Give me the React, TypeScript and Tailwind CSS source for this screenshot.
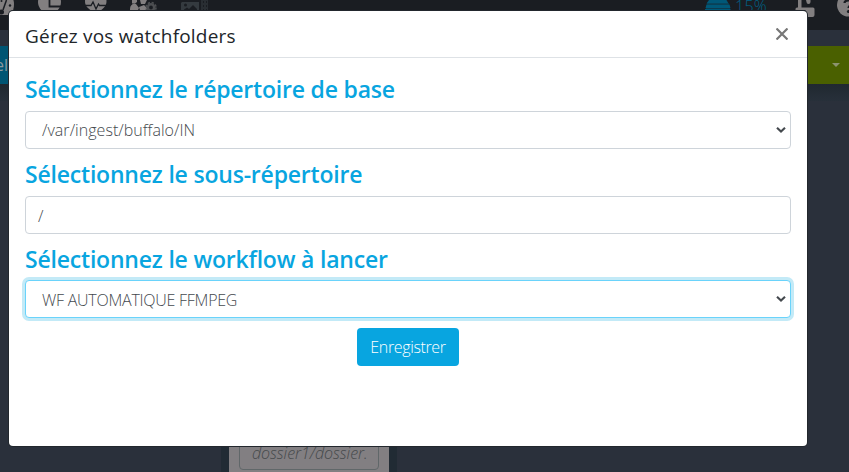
import type { ReactNode } from "react";

function Heading({ children }: { children: ReactNode }) {
  return <h2 className="h-[29px] whitespace-nowrap text-[23px] leading-[29px] font-semibold tracking-[-0.2px] text-[#08a5e0]">{children}</h2>;
}

function Chevron() {
  return (
    <svg width="10" height="8" viewBox="0 0 10 8" fill="none" stroke="#44494e" strokeWidth="2.1">
      <path d="M1 1.8 5 5.6 9 1.8" />
    </svg>
  );
}

function Select({ value, focused, fit }: { value: string; focused?: boolean; fit: string }) {
  return (
    <div
      className={`flex h-[38px] items-center justify-between rounded border bg-white pr-1 pl-4 ${
        focused ? "border-[#6ad3fb] shadow-[0_0_0_3px_#c3eaf7]" : "border-[#ced4da]"
      }`}
    >
      <span className={`whitespace-nowrap ${fit}`}>{value}</span>
      <Chevron />
    </div>
  );
}

function GaugeIcon() {
  return (
    <svg width="16" height="30" viewBox="0 0 16 30">
      <path fill="currentColor" d="M-12 4a13 13 0 0 1 26 0c0 4-1.200 8-3 11H-10z" />
      <path d="M6.500 0 3 10" stroke="#1a1d22" strokeWidth="1.500" />
      <circle cx="1.500" cy="12" r="2.500" fill="#1a1d22" />
      <circle cx="10" cy="5.500" r="1.200" fill="#1a1d22" />
      <circle cx="1.500" cy="1" r="1" fill="#1a1d22" />
    </svg>
  );
}

function PieIcon() {
  return (
    <svg width="24" height="30" viewBox="38 0 24 30">
      <circle cx="49.500" cy="2" r="11.500" fill="currentColor" />
      <path d="M49.500-10V6.500H62" fill="none" stroke="#1a1d22" strokeWidth="1.800" />
    </svg>
  );
}

function HeartbeatIcon() {
  return (
    <svg width="22" height="30" viewBox="85 0 22 30">
      <path fill="currentColor" d="M85 1c0-7 8-9 10.700-4C98-8 106.500-6 106.500 1c0 4-1.500 5.500-3 7l-7 6.200h-1.400L88 8c-1.500-1.500-3-3-3-7" />
      <path d="M85 5.500h6l2-3.500 3 7 2.500-5 1 1.500h7" fill="none" stroke="#1a1d22" strokeWidth="1.300" />
    </svg>
  );
}

function TeamGearIcon() {
  return (
    <svg width="28" height="30" viewBox="130 0 28 30">
      <path fill="currentColor" d="M132 0h5v2l-2 1.500h-3zM140 0h7l-2 4h-4zM130 9c0-4 3-6 6-5l3 4-2 4h-7zM139 7l5-2 4 4-2 5h-5z" />
      <circle cx="151" cy="7.500" r="3.200" fill="none" stroke="#4c4e51" strokeWidth="2.600" />
      <circle cx="151" cy="7.500" r="5" fill="none" stroke="#4c4e51" strokeWidth="1.600" strokeDasharray="2.300 1.630" />
    </svg>
  );
}

function MediaIcon() {
  return (
    <svg width="28" height="30" viewBox="181 0 28 30" fill="#343a3f">
      <path fillRule="evenodd" d="M182 2h17v12h-18V3zM184 5a1.500 1.500 0 1 0 3 0 1.500 1.500 0 0 0-3 0M184 11h13V9l-4-4-4 4-2-1.500-3 2z" />
      <path fill="#292e33" fillRule="evenodd" d="M201 0h7v14h-7zM203 1v2h1V1zm3 0v2h1V1zm-3 4v2h1V5zm3 0v2h1V5zm-3 4v2h1V9zm3 0v2h1V9z" />
    </svg>
  );
}

function ServerIcon() {
  return (
    <svg width="26" height="30" viewBox="705 0 26 30" fill="#005878">
      <path d="M709 0h17.500l2 3.500h-22zM706.500 4.500h23l1 3.500h-25zM705 9h25.500v4H705z" />
      <path d="M707 4.500h22v-1.200h-22zM706 9h24V7.800h-24z" opacity=".5" />
    </svg>
  );
}

function UnlockIcon() {
  return (
    <svg width="20" height="30" viewBox="795 0 20 30" fill="currentColor">
      <path fillRule="evenodd" d="M798 0h3.500v7.500H813a1.500 1.500 0 0 1 1.500 1.500v6a2 2 0 0 1-2 2H797a1.500 1.500 0 0 1-1.500-1.500V9a1.500 1.500 0 0 1 1.500-1.500h1zM803.500 10v3h2v-3z" />
      <path d="M806 0h4.500v2a2 2 0 0 1-4 0z" />
    </svg>
  );
}

function HelpIcon() {
  return (
    <svg width="12" height="30" viewBox="837 0 12 30">
      <circle cx="848.500" cy="5" r="11.500" fill="currentColor" />
      <path d="M844.500 3c0-3 7-4 7 0 0 2.500-3 2.500-3 5" fill="none" stroke="#1a1d22" strokeWidth="2.200" />
      <circle cx="848.400" cy="11.500" r="1.500" fill="#1a1d22" />
    </svg>
  );
}

export default function App() {
  return (
    <div className="relative flex h-[472px] w-[849px] flex-col overflow-hidden bg-[#2a303b] font-['Open_Sans','Noto_Sans',sans-serif] text-base font-light">
      <header className="flex h-[30px] shrink-0 justify-between bg-[#1a1d22] text-[#827f80]">
        <div className="flex">
          <GaugeIcon />
          <span className="ml-[22px]"><PieIcon /></span>
          <span className="ml-[23px]"><HeartbeatIcon /></span>
          <span className="ml-[23px]"><TeamGearIcon /></span>
          <span className="ml-[23px]"><MediaIcon /></span>
        </div>
        <div className="flex">
          <ServerIcon />
          <span className="-mt-[6px] ml-[4px] h-6 w-[60px] leading-[25px] tracking-[0.3px] text-[#006286]">15%</span>
          <UnlockIcon />
          <span className="ml-[22px]"><HelpIcon /></span>
        </div>
      </header>
      <div className="h-4 shrink-0" />
      <div className="flex h-[38px] shrink-0 justify-between">
        <div className="w-[120px] bg-[#005573] pt-[7px] leading-6 text-[#8b999f]">
          <span className="-ml-[5px] font-normal">el</span>
        </div>
        <div className="flex w-[80px] items-center justify-end bg-[#4a6000] pr-[9px]">
          <span className="border-x-4 border-t-4 border-x-transparent border-t-[#8c9370]" />
        </div>
      </div>
      <div className="h-[17px] shrink-0 bg-linear-to-b from-[#202830] to-[#27303a]" />
      <div className="flex flex-1 items-end pl-[221px]">
        <div className="bg-[#212b34] px-2">
          <div className="w-[160px] bg-[#827f82] px-[10px] pb-[2px]">
            <div className="h-[32px] rounded border border-[#606769] pl-3 text-base leading-[29px] tracking-[-0.05px] whitespace-nowrap text-[#464a4c] italic">dossier1/dossier.</div>
          </div>
        </div>
      </div>

      <section className="absolute top-[11px] left-[9px] h-[435px] w-[798px] rounded bg-white text-[#44494e] shadow-[0_0_0_1px_#22272d]">
        <header className="flex h-[47px] items-center justify-between border-b border-[#dee2e6] px-4">
          <h1 className="pt-[3px] text-[19px] leading-7 font-normal tracking-[0.21px] whitespace-nowrap text-[#212529]">Gérez vos watchfolders</h1>
          <svg className="mr-[3px]" width="12" height="12" viewBox="0 0 12 12" stroke="#777" strokeWidth="2.2">
            <path d="m.500.500 11 11M11.500.500l-11 11" />
          </svg>
        </header>
        <div className="px-4 pt-[17px]">
          <Heading>Sélectionnez le répertoire de base</Heading>
          <div className="mt-[7px]">
            <Select value="/var/ingest/buffalo/IN" fit="tracking-[0.03px]" />
          </div>
          <div className="mt-[11px]">
            <Heading>Sélectionnez le sous-répertoire</Heading>
          </div>
          <div className="mt-[7px] flex h-[38px] items-center rounded border border-[#ced4da] px-3 pt-[2px]">/</div>
          <div className="mt-[11px]">
            <Heading>Sélectionnez le workflow à lancer</Heading>
          </div>
          <div className="mt-[6px]">
            <Select value="WF AUTOMATIQUE FFMPEG" fit="pt-[2px] tracking-[-0.25px]" focused />
          </div>
          <div className="mt-[10px] flex justify-center">
            <button className="h-[38px] w-[102px] rounded bg-[#08a5e0] tracking-[-0.36px] text-white">Enregistrer</button>
          </div>
        </div>
      </section>
    </div>
  );
}
